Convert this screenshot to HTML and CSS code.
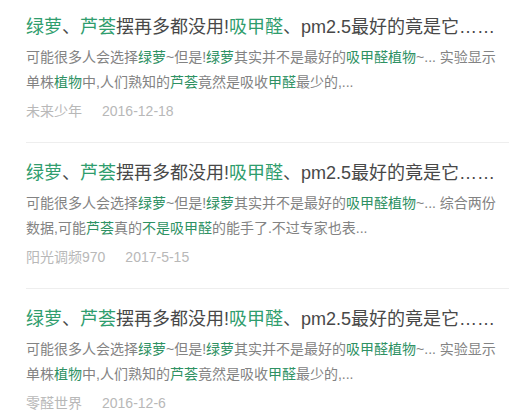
FILE: index.html
```html
<!DOCTYPE html>
<html lang="zh">
<head>
<meta charset="utf-8">
<link rel="stylesheet" href="styles.css">
</head>
<body>
<ul class="list">
  <li class="item">
    <div class="title"><em>绿萝</em>、<em>芦荟</em>摆再多都没用!<em>吸甲醛</em>、pm2.5最好的竟是它……</div>
    <p class="desc">可能很多人会选择<em>绿萝</em>~但是!<em>绿萝</em>其实并不是最好的<em>吸甲醛植物</em>~... 实验显示单株<em>植物</em>中,人们熟知的<em>芦荟</em>竟然是吸收<em>甲醛</em>最少的,...</p>
    <div class="meta"><span class="author">未来少年</span><span class="date">2016-12-18</span></div>
  </li>
  <li class="item">
    <div class="title"><em>绿萝</em>、<em>芦荟</em>摆再多都没用!<em>吸甲醛</em>、pm2.5最好的竟是它……</div>
    <p class="desc">可能很多人会选择<em>绿萝</em>~但是!<em>绿萝</em>其实并不是最好的<em>吸甲醛植物</em>~... 综合两份数据,可能<em>芦荟</em>真的<em>不是吸甲醛</em>的能手了.不过专家也表...</p>
    <div class="meta"><span class="author">阳光调频970</span><span class="date">2017-5-15</span></div>
  </li>
  <li class="item">
    <div class="title"><em>绿萝</em>、<em>芦荟</em>摆再多都没用!<em>吸甲醛</em>、pm2.5最好的竟是它……</div>
    <p class="desc">可能很多人会选择<em>绿萝</em>~但是!<em>绿萝</em>其实并不是最好的<em>吸甲醛植物</em>~... 实验显示单株<em>植物</em>中,人们熟知的<em>芦荟</em>竟然是吸收<em>甲醛</em>最少的,...</p>
    <div class="meta"><span class="author">零醛世界</span><span class="date">2016-12-6</span></div>
  </li>
</ul>
</body>
</html>
```

FILE: styles.css
```css
html, body {
  margin: 0;
  padding: 0;
  background: #ffffff;
}
body {
  font-family: "Liberation Sans", "Noto Sans CJK SC", sans-serif;
  width: 509px;
  overflow: hidden;
}
.list {
  list-style: none;
  margin: 0;
  padding: 0 0 0 26px;
}
.item {
  padding: 19px 9px 21px 0;
  border-bottom: 1px solid #eeeeee;
}
.item:first-child {
  padding-top: 16px;
}
.item:last-child {
  border-bottom: none;
}
em {
  font-style: normal;
}
.title {
  font-size: 18px;
  line-height: 22px;
  color: #484848;
  white-space: nowrap;
}
.title em {
  color: #2f9d6d;
}
.desc {
  margin: 7px 0 0;
  font-size: 14px;
  line-height: 25px;
  color: #838383;
}
.desc em {
  color: #2e9163;
}
.meta {
  margin-top: 6px;
  font-size: 14px;
  line-height: 20px;
  color: #b8b8b8;
  display: flex;
  gap: 20px;
}
```
